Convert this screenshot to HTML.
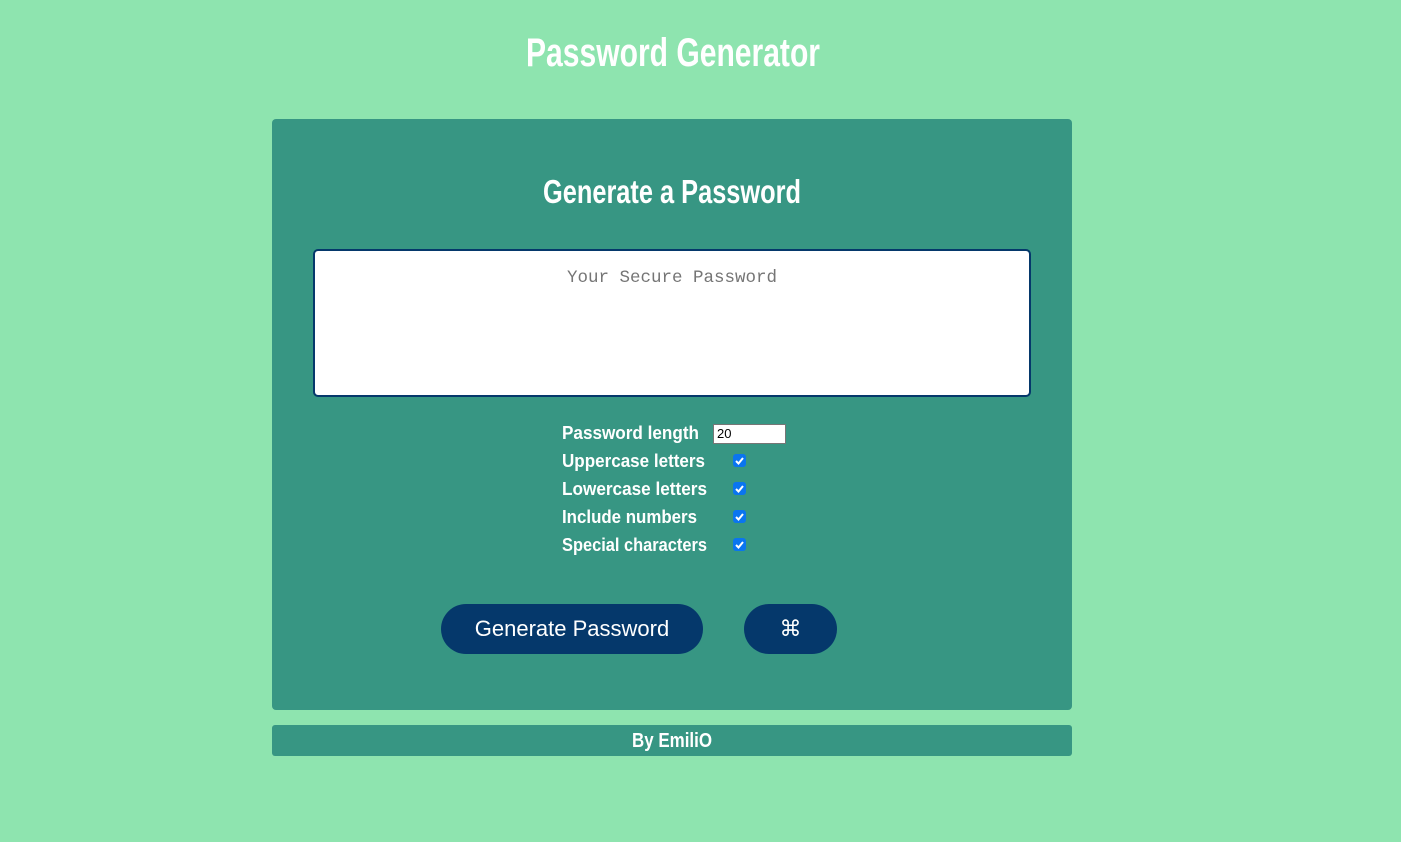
<!DOCTYPE html>
<html><head><meta charset="utf-8"><style>
html,body{margin:0;padding:0;width:1401px;height:842px;background:#8ee4af;overflow:hidden;font-family:"Liberation Sans",sans-serif}
.abs{position:absolute}
svg text{font-family:"Liberation Sans",sans-serif;font-weight:bold;fill:#fff}
.card{left:272px;top:119px;width:800px;height:591px;background:#379683;border-radius:4px}
.ta{left:313px;top:249px;width:714px;height:144px;background:#fff;border:2px solid #05386b;border-radius:5px}
.ph{left:313px;top:268px;width:718px;text-align:center;font-family:"Liberation Mono",monospace;font-size:17.5px;color:#757575}
.inp{left:713px;top:424px;width:71px;height:18px;background:#fff;border:1px solid #767676;font-size:13px;line-height:18px;box-sizing:content-box}
.inp span{padding-left:3px}
.cb{width:13px;height:13px;background:#0a75f0;border-radius:3px;left:733px}
.btn{background:#05386b;border-radius:25px;height:50px;color:#fff;text-align:center;line-height:50px;font-size:22px}
.foot{left:272px;top:725px;width:800px;height:31px;background:#379683;border-radius:3px}
</style></head><body>
<div class="abs card"></div>
<div class="abs ta"></div>
<div class="abs ph">Your Secure Password</div>
<div class="abs inp"><span>20</span></div>
<div class="abs cb" style="top:454px"><svg width="13" height="13"><path d="M3 7l2.5 2.5L10 4" stroke="#fff" stroke-width="2" fill="none"/></svg></div>
<div class="abs cb" style="top:482px"><svg width="13" height="13"><path d="M3 7l2.5 2.5L10 4" stroke="#fff" stroke-width="2" fill="none"/></svg></div>
<div class="abs cb" style="top:510px"><svg width="13" height="13"><path d="M3 7l2.5 2.5L10 4" stroke="#fff" stroke-width="2" fill="none"/></svg></div>
<div class="abs cb" style="top:538px"><svg width="13" height="13"><path d="M3 7l2.5 2.5L10 4" stroke="#fff" stroke-width="2" fill="none"/></svg></div>
<div class="abs btn" style="left:441px;top:604px;width:262px">Generate Password</div>
<div class="abs btn" style="left:744px;top:604px;width:93px">⌘</div>
<div class="abs foot"></div>
<svg class="abs" style="left:0;top:0" width="1401" height="842">
<text x="526" y="66" font-size="40" textLength="294" lengthAdjust="spacingAndGlyphs">Password Generator</text>
<text x="543" y="203" font-size="33" textLength="258" lengthAdjust="spacingAndGlyphs">Generate a Password</text>
<g>
<text x="562" y="439" font-size="18" textLength="137" lengthAdjust="spacingAndGlyphs" style="font-weight:600">Password length</text>
<text x="562" y="467" font-size="18" textLength="143" lengthAdjust="spacingAndGlyphs" style="font-weight:600">Uppercase letters</text>
<text x="562" y="495" font-size="18" textLength="145" lengthAdjust="spacingAndGlyphs" style="font-weight:600">Lowercase letters</text>
<text x="562" y="523" font-size="18" textLength="135" lengthAdjust="spacingAndGlyphs" style="font-weight:600">Include numbers</text>
<text x="562" y="551" font-size="18" textLength="145" lengthAdjust="spacingAndGlyphs" style="font-weight:600">Special characters</text>
</g>
<text x="632" y="747" font-size="20" textLength="80" lengthAdjust="spacingAndGlyphs">By EmiliO</text>
</svg>
</body></html>
